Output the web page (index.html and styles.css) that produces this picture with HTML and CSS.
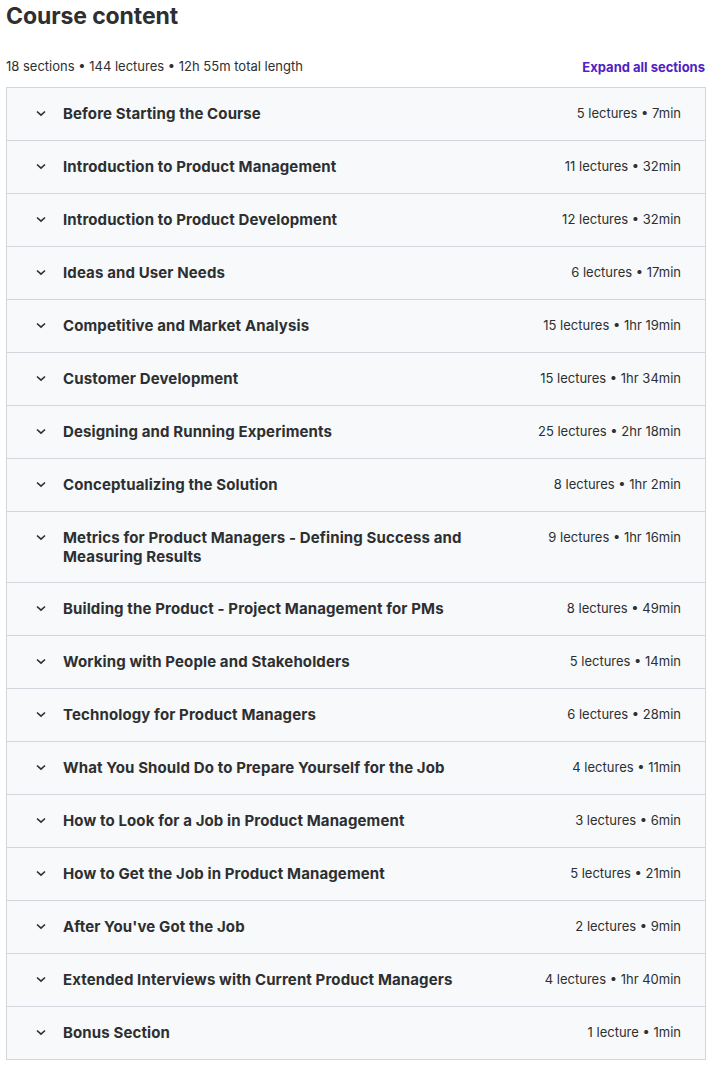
FILE: index.html
```html
<!DOCTYPE html>
<html lang="en">
<head>
    <meta charset="UTF-8">
    <meta name="viewport" content="width=device-width, initial-scale=1.0">
    <title>Course content</title>
    <link rel="stylesheet" href="styles.css">
</head>
<body>
    <div class="curriculum">
        <h2 class="curriculum-title">Course content</h2>

        <div class="curriculum-sub">
            <span class="curriculum-stats">18 sections • 144 lectures • 12h 55m total length</span>
            <a class="expand-link" href="#">Expand all sections</a>
        </div>

        <div class="section-list">
            <div class="section-row">
                <span class="chevron"><svg viewBox="0 0 12 12"><path d="M2 4.5 6 8.2l4-3.7"/></svg></span>
                <span class="section-title">Before Starting the Course</span>
                <span class="section-meta">5 lectures • 7min</span>
            </div>
            <div class="section-row">
                <span class="chevron"><svg viewBox="0 0 12 12"><path d="M2 4.5 6 8.2l4-3.7"/></svg></span>
                <span class="section-title">Introduction to Product Management</span>
                <span class="section-meta">11 lectures • 32min</span>
            </div>
            <div class="section-row">
                <span class="chevron"><svg viewBox="0 0 12 12"><path d="M2 4.5 6 8.2l4-3.7"/></svg></span>
                <span class="section-title">Introduction to Product Development</span>
                <span class="section-meta">12 lectures • 32min</span>
            </div>
            <div class="section-row">
                <span class="chevron"><svg viewBox="0 0 12 12"><path d="M2 4.5 6 8.2l4-3.7"/></svg></span>
                <span class="section-title">Ideas and User Needs</span>
                <span class="section-meta">6 lectures • 17min</span>
            </div>
            <div class="section-row">
                <span class="chevron"><svg viewBox="0 0 12 12"><path d="M2 4.5 6 8.2l4-3.7"/></svg></span>
                <span class="section-title">Competitive and Market Analysis</span>
                <span class="section-meta">15 lectures • 1hr 19min</span>
            </div>
            <div class="section-row">
                <span class="chevron"><svg viewBox="0 0 12 12"><path d="M2 4.5 6 8.2l4-3.7"/></svg></span>
                <span class="section-title">Customer Development</span>
                <span class="section-meta">15 lectures • 1hr 34min</span>
            </div>
            <div class="section-row">
                <span class="chevron"><svg viewBox="0 0 12 12"><path d="M2 4.5 6 8.2l4-3.7"/></svg></span>
                <span class="section-title">Designing and Running Experiments</span>
                <span class="section-meta">25 lectures • 2hr 18min</span>
            </div>
            <div class="section-row">
                <span class="chevron"><svg viewBox="0 0 12 12"><path d="M2 4.5 6 8.2l4-3.7"/></svg></span>
                <span class="section-title">Conceptualizing the Solution</span>
                <span class="section-meta">8 lectures • 1hr 2min</span>
            </div>
            <div class="section-row">
                <span class="chevron"><svg viewBox="0 0 12 12"><path d="M2 4.5 6 8.2l4-3.7"/></svg></span>
                <span class="section-title">Metrics for Product Managers - Defining Success and Measuring Results</span>
                <span class="section-meta">9 lectures • 1hr 16min</span>
            </div>
            <div class="section-row">
                <span class="chevron"><svg viewBox="0 0 12 12"><path d="M2 4.5 6 8.2l4-3.7"/></svg></span>
                <span class="section-title">Building the Product - Project Management for PMs</span>
                <span class="section-meta">8 lectures • 49min</span>
            </div>
            <div class="section-row">
                <span class="chevron"><svg viewBox="0 0 12 12"><path d="M2 4.5 6 8.2l4-3.7"/></svg></span>
                <span class="section-title">Working with People and Stakeholders</span>
                <span class="section-meta">5 lectures • 14min</span>
            </div>
            <div class="section-row">
                <span class="chevron"><svg viewBox="0 0 12 12"><path d="M2 4.5 6 8.2l4-3.7"/></svg></span>
                <span class="section-title">Technology for Product Managers</span>
                <span class="section-meta">6 lectures • 28min</span>
            </div>
            <div class="section-row">
                <span class="chevron"><svg viewBox="0 0 12 12"><path d="M2 4.5 6 8.2l4-3.7"/></svg></span>
                <span class="section-title">What You Should Do to Prepare Yourself for the Job</span>
                <span class="section-meta">4 lectures • 11min</span>
            </div>
            <div class="section-row">
                <span class="chevron"><svg viewBox="0 0 12 12"><path d="M2 4.5 6 8.2l4-3.7"/></svg></span>
                <span class="section-title">How to Look for a Job in Product Management</span>
                <span class="section-meta">3 lectures • 6min</span>
            </div>
            <div class="section-row">
                <span class="chevron"><svg viewBox="0 0 12 12"><path d="M2 4.5 6 8.2l4-3.7"/></svg></span>
                <span class="section-title">How to Get the Job in Product Management</span>
                <span class="section-meta">5 lectures • 21min</span>
            </div>
            <div class="section-row">
                <span class="chevron"><svg viewBox="0 0 12 12"><path d="M2 4.5 6 8.2l4-3.7"/></svg></span>
                <span class="section-title">After You've Got the Job</span>
                <span class="section-meta">2 lectures • 9min</span>
            </div>
            <div class="section-row">
                <span class="chevron"><svg viewBox="0 0 12 12"><path d="M2 4.5 6 8.2l4-3.7"/></svg></span>
                <span class="section-title">Extended Interviews with Current Product Managers</span>
                <span class="section-meta">4 lectures • 1hr 40min</span>
            </div>
            <div class="section-row">
                <span class="chevron"><svg viewBox="0 0 12 12"><path d="M2 4.5 6 8.2l4-3.7"/></svg></span>
                <span class="section-title">Bonus Section</span>
                <span class="section-meta">1 lecture • 1min</span>
            </div>
        </div>
    </div>
</body>
</html>
```

FILE: styles.css
```css
body {
    margin: 0;
    padding: 0;
    background: #fff;
    color: #2d2f31;
    font-family: Inter, 'Liberation Sans', sans-serif;
}

.curriculum {
    padding: 0 6px;
    width: 700px;
}

.curriculum-title {
    font-size: 23px;
    font-weight: 700;
    line-height: 32px;
    margin: 0;
    letter-spacing: -0.1px;
}

.curriculum-sub {
    display: flex;
    justify-content: space-between;
    align-items: flex-end;
    margin-top: 24px;
    margin-bottom: 11px;
}

.curriculum-stats {
    font-size: 13px;
    line-height: 20px;
}

.expand-link {
    color: #5022c3;
    font-size: 13px;
    font-weight: 700;
    text-decoration: none;
    line-height: 20px;
    margin-bottom: -1px;
    margin-right: 1px;
}

.section-list {
    border: 1px solid #d1d7dc;
    border-bottom: none;
}

.section-row {
    display: flex;
    align-items: flex-start;
    background: #f7f9fa;
    border-bottom: 1px solid #d1d7dc;
    padding: 16px 24px 16px 28px;
}

.chevron {
    width: 12px;
    height: 20px;
    display: flex;
    align-items: center;
    margin-right: 17px;
    margin-top: -1px;
    flex-shrink: 0;
}

.chevron svg {
    width: 12px;
    height: 12px;
    fill: none;
    stroke: #2d2f31;
    stroke-width: 1.6;
}

.section-title {
    flex: 1;
    font-size: 15px;
    font-weight: 700;
    line-height: 19px;
    letter-spacing: 0.12px;
    margin-left: -1px;
}

.section-meta {
    font-size: 13px;
    line-height: 20px;
    margin: -1px 0 1px 48px;
    white-space: nowrap;
}
```
